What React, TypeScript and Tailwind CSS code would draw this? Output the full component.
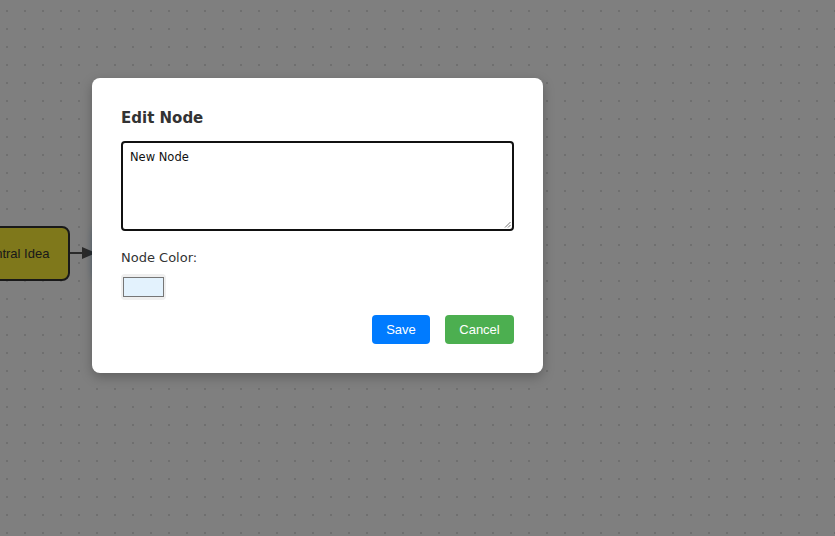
import React from "react";

export default function App() {
  return (
    <div className="relative w-[835px] h-[536px] overflow-hidden bg-white bg-[radial-gradient(circle,#dedede_1px,transparent_1.2px)] bg-[length:18px_18px] bg-[position:-2px_2px] font-['Liberation_Sans',Arial,sans-serif]">
      {/* canvas nodes */}
      <div className="absolute left-[-42px] top-[226px] w-[112px] h-[55px] rounded-[8px] border-2 border-[#333] bg-[#fef036] flex items-center justify-center text-[13px] text-[#333]">
        Central Idea
      </div>
      <svg className="absolute left-[70px] top-[246px]" width="30" height="14" viewBox="0 0 30 14">
        <line x1="0" y1="7" x2="16" y2="7" stroke="#555" strokeWidth="2" />
        <polygon points="12,1 26,7 12,13" fill="#555" />
      </svg>
      <div className="absolute left-[96px] top-[226px] w-[112px] h-[55px] rounded-[8px] border-2 border-[#2196f3] bg-[#e3f2fd] shadow-[0_0_10px_rgba(33,150,243,0.8)]" />

      {/* overlay */}
      <div className="absolute inset-0 bg-black/50" />

      {/* modal */}
      <div className="absolute left-[92px] top-[78px] w-[451px] h-[295px] rounded-[8px] bg-white p-[29px] shadow-[0_4px_12px_rgba(0,0,0,0.25)] font-['DejaVu_Sans',Verdana,sans-serif] flex flex-col">
        <div className="mt-[1px] text-[15px] font-bold text-[#333] leading-[20px]">Edit Node</div>
        <div className="relative mt-[13px] h-[90px] w-full shrink-0 rounded-[4px] border-2 border-[#111] bg-white px-[7px] pt-[7px] text-[11.5px] text-[#111] leading-[14px]">
          New Node
          <svg className="absolute right-[1px] bottom-[1px]" width="7" height="7" viewBox="0 0 7 7">
            <line x1="1" y1="6.5" x2="6.5" y2="1" stroke="#777" strokeWidth="1" />
            <line x1="4" y1="6.5" x2="6.5" y2="4" stroke="#777" strokeWidth="1" />
          </svg>
        </div>
        <div className="mt-[19px] text-[13px] text-[#333] leading-[16px]">Node Color:</div>
        <div className="mt-[8px] w-[45px] h-[26px] rounded-[4px] bg-[#efefef] flex items-center justify-center">
          <div className="w-[41px] h-[20px] border border-[#767676] bg-[#e3f2fd]" />
        </div>
        <div className="mt-auto flex justify-end gap-[15px] font-['Liberation_Sans',Arial,sans-serif]">
          <div className="w-[58px] h-[29px] rounded-[4px] bg-[#007bff] text-white text-[13px] flex items-center justify-center">Save</div>
          <div className="w-[69px] h-[29px] rounded-[4px] bg-[#4caf50] text-white text-[13px] flex items-center justify-center">Cancel</div>
        </div>
      </div>
    </div>
  );
}
